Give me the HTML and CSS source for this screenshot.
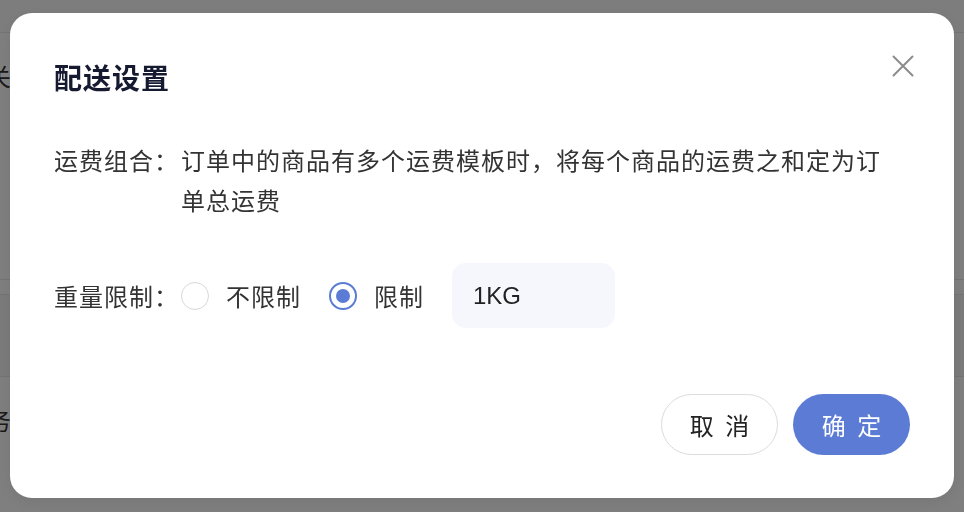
FILE: index.html
```html
<!DOCTYPE html>
<html lang="zh-CN">
<head>
<meta charset="utf-8">
<title>配送设置</title>
<link rel="stylesheet" href="styles.css">
</head>
<body>
<div class="page">
  <div class="page-top"></div>
  <div class="page-section">
    <div class="page-text">开关</div>
  </div>
  <div class="page-thin"></div>
  <div class="page-band"></div>
  <div class="page-section page-section--last">
    <div class="page-text">服务</div>
  </div>
</div>
<div class="overlay"></div>
<div class="modal">
  <button class="modal-close" aria-label="关闭">
    <svg width="22" height="22" viewBox="0 0 22 22"><path d="M1.5 1.5 L20.5 20.5 M20.5 1.5 L1.5 20.5" stroke="#8c8c8c" stroke-width="2" stroke-linecap="round" fill="none"/></svg>
  </button>
  <h1 class="modal-title">配送设置</h1>
  <div class="form-row">
    <div class="form-label">运费组合：</div>
    <div class="form-value">订单中的商品有多个运费模板时，将每个商品的运费之和定为订单总运费</div>
  </div>
  <div class="form-row form-row--center">
    <div class="form-label">重量限制：</div>
    <div class="radio-group">
      <label class="radio"><span class="radio-circle"></span><span class="radio-text">不限制</span></label>
      <label class="radio radio--checked"><span class="radio-circle"></span><span class="radio-text">限制</span></label>
      <div class="weight-input">1KG</div>
    </div>
  </div>
  <div class="modal-footer">
    <button class="btn btn--ghost">取 消</button>
    <button class="btn btn--primary">确 定</button>
  </div>
</div>
</body>
</html>
```

FILE: styles.css
```css
* { box-sizing: border-box; }
html, body { margin: 0; padding: 0; }
body {
  width: 964px;
  height: 512px;
  overflow: hidden;
  background: #ffffff;
  font-family: "Liberation Sans", "Noto Sans CJK SC", sans-serif;
  color: #333333;
}
.page { width: 964px; }
.page-top { height: 33px; background: #fafafa; border-bottom: 1px solid #e8e8e8; }
.page-section { height: 247px; border-bottom: 1px solid #e8e8e8; padding-top: 28px; }
.page-thin { height: 15px; border-bottom: 1px solid #e8e8e8; }
.page-band { height: 82px; background: #f7f7f7; border-bottom: 1px solid #e8e8e8; }
.page-section--last { height: 137px; border-bottom: 0; padding-top: 28px; }
.page-text {
  margin-left: -37px;
  font-size: 24px;
  line-height: 30px;
  color: #333;
  font-family: "Noto Sans CJK SC", sans-serif;
}
.overlay {
  position: fixed;
  inset: 0;
  background: rgba(0, 0, 0, 0.5);
}
.modal {
  position: fixed;
  left: 10px;
  top: 13px;
  width: 944px;
  height: 485px;
  background: #ffffff;
  border-radius: 22px;
  padding: 44px 44px 43px 44px;
  display: flex;
  flex-direction: column;
  box-shadow: 0 4px 16px rgba(0,0,0,0.08);
}
.modal-close {
  position: absolute;
  right: 40px;
  top: 42px;
  width: 22px;
  height: 22px;
  padding: 0;
  border: 0;
  background: transparent;
  display: block;
}
.modal-close svg { display: block; }
.modal-title {
  margin: 0;
  font-size: 28px;
  line-height: 40px;
  font-weight: 700;
  letter-spacing: 1px;
  color: #151a30;
  font-family: "Noto Sans CJK SC", sans-serif;
}
.form-row {
  display: flex;
  align-items: flex-start;
  margin-top: 43px;
  font-size: 24px;
  line-height: 40px;
  letter-spacing: 1px;
  color: #333333;
}
.form-row--center { align-items: center; margin-top: 43px; }
.form-label {
  width: 127px;
  flex: none;
  font-family: "Noto Sans CJK SC", sans-serif;
  color: #333;
}
.form-value {
  flex: 1;
  font-family: "Noto Sans CJK SC", sans-serif;
  color: #333;
  padding-right: 20px;
}
.radio-group {
  display: flex;
  align-items: center;
}
.radio {
  display: flex;
  align-items: center;
  margin-right: 28px;
}
.radio-circle {
  width: 28px;
  height: 28px;
  border-radius: 50%;
  border: 1.5px solid #d8d8d8;
  margin-right: 17px;
  position: relative;
  flex: none;
}
.radio--checked .radio-circle { border: 2px solid #5b7bd5; }
.radio--checked .radio-circle::after {
  content: "";
  position: absolute;
  left: 5px;
  top: 5px;
  width: 14px;
  height: 14px;
  border-radius: 50%;
  background: #5b7bd5;
}
.radio-text {
  font-family: "Noto Sans CJK SC", sans-serif;
  color: #333;
}
.weight-input {
  width: 163px;
  height: 65px;
  border-radius: 14px;
  background: #f5f7fc;
  padding-left: 21px;
  display: flex;
  align-items: center;
  font-family: "Liberation Sans", sans-serif;
  font-size: 24px;
  letter-spacing: 0;
  color: #222;
}
.modal-footer {
  margin-top: auto;
  display: flex;
  justify-content: flex-end;
  gap: 15px;
}
.btn {
  width: 117px;
  height: 61px;
  border-radius: 31px;
  font-family: "Noto Sans CJK SC", sans-serif;
  font-size: 24px;
  letter-spacing: 3px;
  padding: 0 0 0 3px;
  display: flex;
  align-items: center;
  justify-content: center;
  cursor: pointer;
}
.btn--ghost {
  background: #ffffff;
  border: 1.5px solid #dcdcdc;
  color: #222;
}
.btn--primary {
  background: #5b7bd5;
  border: 0;
  color: #ffffff;
}
```
